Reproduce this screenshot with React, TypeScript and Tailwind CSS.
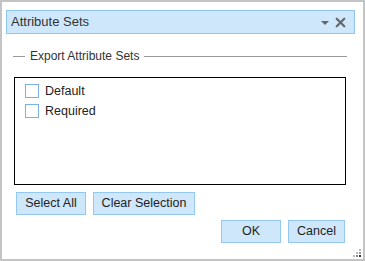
import { X } from 'lucide-react';

function Checkbox({ label }: { label: string }) {
  return (
    <label className="flex items-center gap-[6px] h-[20px]">
      <span className="block w-[14px] h-[14px] border border-[#7ab3e2] bg-white" />
      <span>{label}</span>
    </label>
  );
}

function Button({ children, className = '' }: { children: React.ReactNode; className?: string }) {
  return (
    <button
      className={`h-[23px] border border-[#94c8f2] bg-[#cfe7fb] text-[12.5px] text-[#222] ${className}`}
    >
      {children}
    </button>
  );
}

export default function App() {
  return (
    <div
      className="relative w-[365px] h-[261px] bg-white border-2 border-[#c4c4c4] text-[12.5px] text-[#222]"
      style={{ fontFamily: '"Liberation Sans", Arial, sans-serif' }}
    >
      <div className="flex flex-col pt-[8px] pl-[4px] pr-[8px]">
        {/* Title bar */}
        <div className="flex items-center h-[24px] border border-[#8fc5f0] bg-[#cfe7fb] pl-[4px] pr-[6px]">
          <span className="flex-1 text-[13px] text-[#333]">Attribute Sets</span>
          <svg width="8" height="4" viewBox="0 0 8 4" className="mr-[4px] mt-[2px]">
            <path d="M0 0 H8 L4 4 Z" fill="#666" />
          </svg>
          <X className="w-[15px] h-[15px] text-[#666]" strokeWidth={3.5} />
        </div>

        {/* Fieldset legend */}
        <div className="flex items-center mt-[12px] pl-[7px] pr-[8px] h-[20px]">
          <span className="w-[12px] h-px bg-[#999]" />
          <span className="px-[5px] text-[12px] text-[#333]">Export Attribute Sets</span>
          <span className="flex-1 h-px bg-[#999]" />
        </div>

        {/* List box */}
        <div className="ml-[8px] mr-[9px] mt-[11px] h-[108px] border border-black pt-[3px] pl-[10px] flex flex-col">
          <Checkbox label="Default" />
          <Checkbox label="Required" />
        </div>

        {/* Selection buttons */}
        <div className="flex gap-[7px] mt-[7px] pl-[10px]">
          <Button className="w-[70px]">Select All</Button>
          <Button className="w-[102px]">Clear Selection</Button>
        </div>

        {/* Dialog buttons */}
        <div className="flex justify-end gap-[7px] mt-[5px] pr-[10px]">
          <Button className="w-[60px]">OK</Button>
          <Button className="w-[57px]">Cancel</Button>
        </div>
      </div>

      {/* Resize grip */}
      <svg width="10" height="10" viewBox="0 0 10 10" className="absolute right-[1px] bottom-[1px]">
        <rect x="7" y="1" width="2" height="2" fill="#bbb" />
        <rect x="4" y="4" width="2" height="2" fill="#bbb" />
        <rect x="7" y="4" width="2" height="2" fill="#999" />
        <rect x="1" y="7" width="2" height="2" fill="#bbb" />
        <rect x="4" y="7" width="2" height="2" fill="#888" />
        <rect x="7" y="7" width="2" height="2" fill="#333" />
      </svg>
    </div>
  );
}
